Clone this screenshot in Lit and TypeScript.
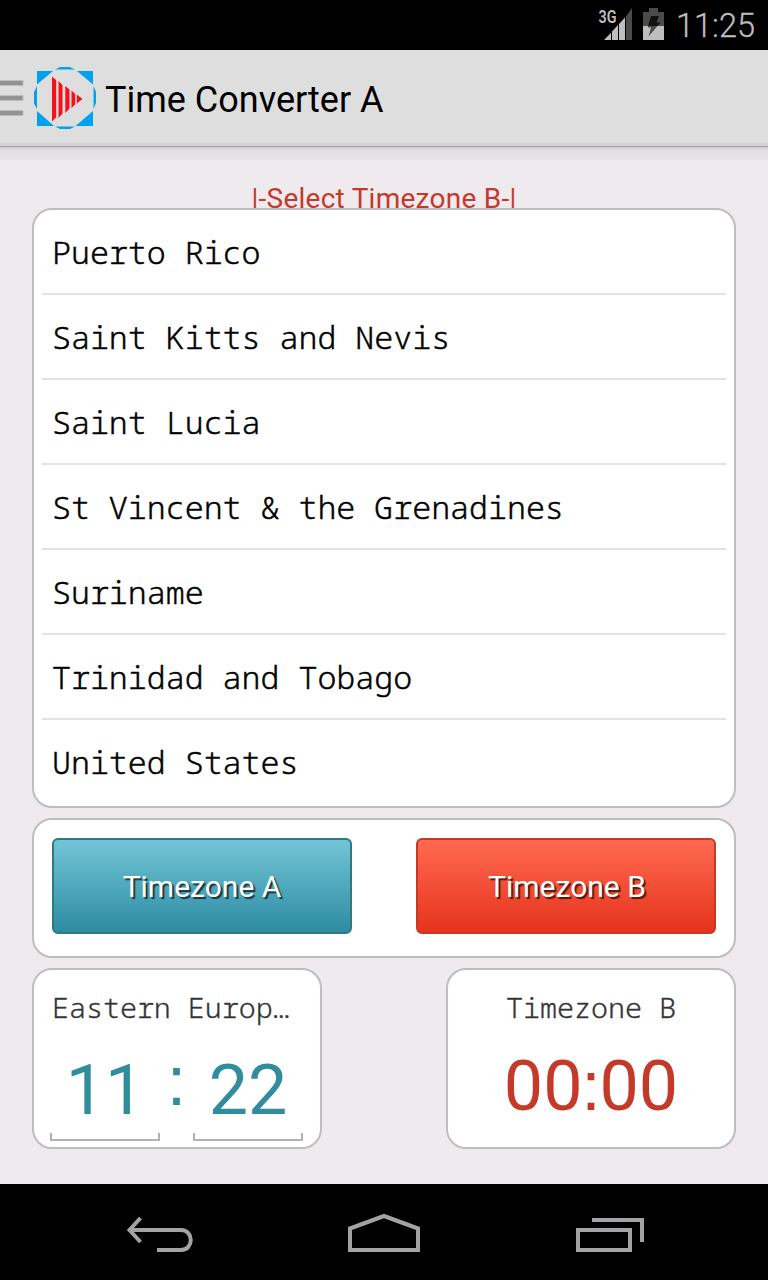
import { LitElement, html, css } from "lit";
import { customElement, state } from "lit/decorators.js";

@customElement("app-root")
export class AppRoot extends LitElement {
  @state() private zones = [
    "Puerto Rico",
    "Saint Kitts and Nevis",
    "Saint Lucia",
    "St Vincent & the Grenadines",
    "Suriname",
    "Trinidad and Tobago",
    "United States",
  ];

  static styles = css`
    :host { display: flex; flex-direction: column; width: 768px; height: 1280px; overflow: hidden;
      background: #eeeaed; font-family: Roboto, sans-serif; color: #000; }
    * { box-sizing: border-box; }
    svg { display: block; flex: none; }
    .status { height: 50px; flex: none; background: #000; display: flex; justify-content: flex-end; padding-right: 12px; }
    .clock { color: #bebebe; font-size: 32.500px; line-height: 52px; width: 80px; margin-left: 10px; white-space: nowrap;
      font-weight: 300; -webkit-text-stroke: 0.3px #bebebe; }
    .bar { height: 97px; flex: none; background: #dedede; border-bottom: 1px solid #a0a0a0; box-shadow: inset 0 -3px #d2d2d2;
      display: flex; }
    .title { font-size: 36px; line-height: 100px; margin-left: 5px; white-space: nowrap; }
    .shade { height: 13px; flex: none; background: linear-gradient(#ceccce, #e0dee0 25%, #e7e5e7); }
    .main { flex: 1; padding: 0 32px; display: flex; flex-direction: column; }
    .heading { height: 48px; flex: none; text-align: center; color: #c53929;
      font-size: 28px; letter-spacing: 0.25px; line-height: 33px; padding-top: 22px; white-space: nowrap; }
    .panel { background: #fff; border: 2px solid #bebebe; border-radius: 20px; }
    .list { position: relative; height: 600px; flex: none; padding: 0 8px; font-family: "Noto Sans Mono", "DejaVu Sans Mono", monospace;
      font-size: 31.6px; font-weight: 300; -webkit-text-stroke: 0.5px #000; }
    .row { height: 85px; line-height: 84px; padding-left: 10px; border-bottom: 2px solid #e3e3e3; white-space: pre; }
    .row:last-child { border-bottom: none; }
    .buttons { margin-top: 10px; height: 140px; flex: none; padding: 18px; display: flex; justify-content: space-between; }
    .btn { width: 300px; height: 96px; border-radius: 6px; border: 2px solid; color: #fff; font: 30px/94px Roboto, sans-serif;
      text-align: center; padding: 0; text-shadow: 2px 2px 1px #000a; }
    .a { border-color: #2d7b80; background: linear-gradient(#72c5d6, #2d8ca2); }
    .b { border-color: #c53929; background: linear-gradient(#ff6a50, #e6331c); padding-left: 2px; }
    .cards { margin-top: 10px; display: flex; justify-content: space-between; }
    .card { width: 290px; height: 181px; padding: 0 16px; }
    .label { font-family: "Noto Sans Mono", "DejaVu Sans Mono", monospace; font-size: 28.3px; line-height: 36px; margin-top: 19px;
      color: #333; white-space: pre; text-align: center; font-weight: 300; -webkit-text-stroke: 0.4px #333; }
    .left { text-align: left; padding-left: 2px; }
    .time { display: flex; color: #318c9c; font-size: 70px; line-height: 82px; }
    .field { width: 110px; height: 108px; padding-top: 24px; text-align: center; }
    .colon { width: 33px; padding-top: 15px; display: flex; justify-content: center; font-family: "Liberation Sans", sans-serif; }
    .under { display: flex; gap: 33px; }
    .edge { width: 110px; height: 8px; border: 2px solid #b3b3b3; border-top: 0; }
    .big { color: #c53929; font-size: 70px; line-height: 82px; margin-top: 20px; text-align: center; }
    .sep { font-family: "Liberation Sans", sans-serif; margin: 0 -1.250px; line-height: 1; }
    .nav { height: 96px; flex: none; background: #000; }
  `;

  render() {
    return html`
      <div class="status">
        <svg width="68" height="50" viewBox="598 0 68 50">
          <text x="598.500" y="23" font-family="Roboto" font-weight="600" font-size="17.500" fill="#bebebe" textLength="18" lengthAdjust="spacingAndGlyphs">3G</text>
          <path fill="#bebebe" d="M604 40 611 32.8V40zM612 31.5 618 25V40h-6zM619 24 625 17.5V40h-6z" />
          <path fill="#4a4c4a" d="M626 16.5 632 8V40h-6z" />
          <path fill="#4a4c4a" d="M643 12h6V8h9v4h6v14h-21z" />
          <path fill="#bebebe" d="M643 26h21v14h-21z" />
          <path fill="#101410" d="M651 16h8l-2.5 6.5H661L657.5 26H648z" />
          <path fill="#4a4c4a" d="M648 26h9.500L648.500 36.500 651 27.500h-3z" />
        </svg>
        <div class="clock">11:25</div>
      </div>
      <div class="bar">
        <svg width="100" height="96" viewBox="0 50 100 96">
          <g fill="#929292" stroke="#bcbcbc" stroke-width="1"><path d="M-2 80.500H23v5H-2zM-2 95.500H23v5H-2zM-2 110.500H23v5H-2z" /></g>
          <g fill="#00a2f0">
            <path d="M37 71H53L37 84.500zM77 71H93V84.500zM93 111V126H75.500zM37 111V126H54z" />
            <path d="M55 69.500 60 67H70L75 69.500zM55 126.500H75L70 129H60zM37 86V109L34 103.500V92zM93.500 86 96 92V103L93.500 109z" />
          </g>
          <path fill="#f3131d" d="M52 76.500 56.200 80V117.500L52 121.500zM58.500 81 62.500 85V113.500L58.500 118zM65.300 86 69.500 89.500V108.500L65.300 113zM71.500 90.500 75.200 94V104.500L71.500 108zM76.800 94.500 82.500 99 76.800 103.500z" />
        </svg>
        <div class="title">Time Converter A</div>
      </div>
      <div class="shade"></div>
      <div class="main">
        <div class="heading">|-Select Timezone B-|</div>
        <div class="panel list">${this.zones.map((z) => html`<div class="row">${z}</div>`)}</div>
        <div class="panel buttons">
          <button class="btn a">Timezone A</button>
          <button class="btn b">Timezone B</button>
        </div>
        <div class="cards">
          <div class="panel card">
            <div class="label left">Eastern Europ…</div>
            <div class="time"><div class="field">11</div><div class="colon">:</div><div class="field">22</div></div>
            <div class="under"><div class="edge"></div><div class="edge"></div></div>
          </div>
          <div class="panel card">
            <div class="label">Timezone B</div>
            <div class="big">00<span class="sep">:</span>00</div>
          </div>
        </div>
      </div>
      <div class="nav">
        <svg width="768" height="96" viewBox="0 1184 768 96" fill="none" stroke="#a5a2a5" stroke-width="4">
          <path d="M131 1230H181C194 1230 194 1250 181 1250H157" />
          <path d="M140.500 1218 129.500 1230 140.500 1242" />
          <path d="M350 1250V1228.500L384 1216 418 1228.500V1250z" />
          <path d="M578 1230H630V1250H578zM592 1220H642V1242" />
        </svg>
      </div>
    `;
  }
}
